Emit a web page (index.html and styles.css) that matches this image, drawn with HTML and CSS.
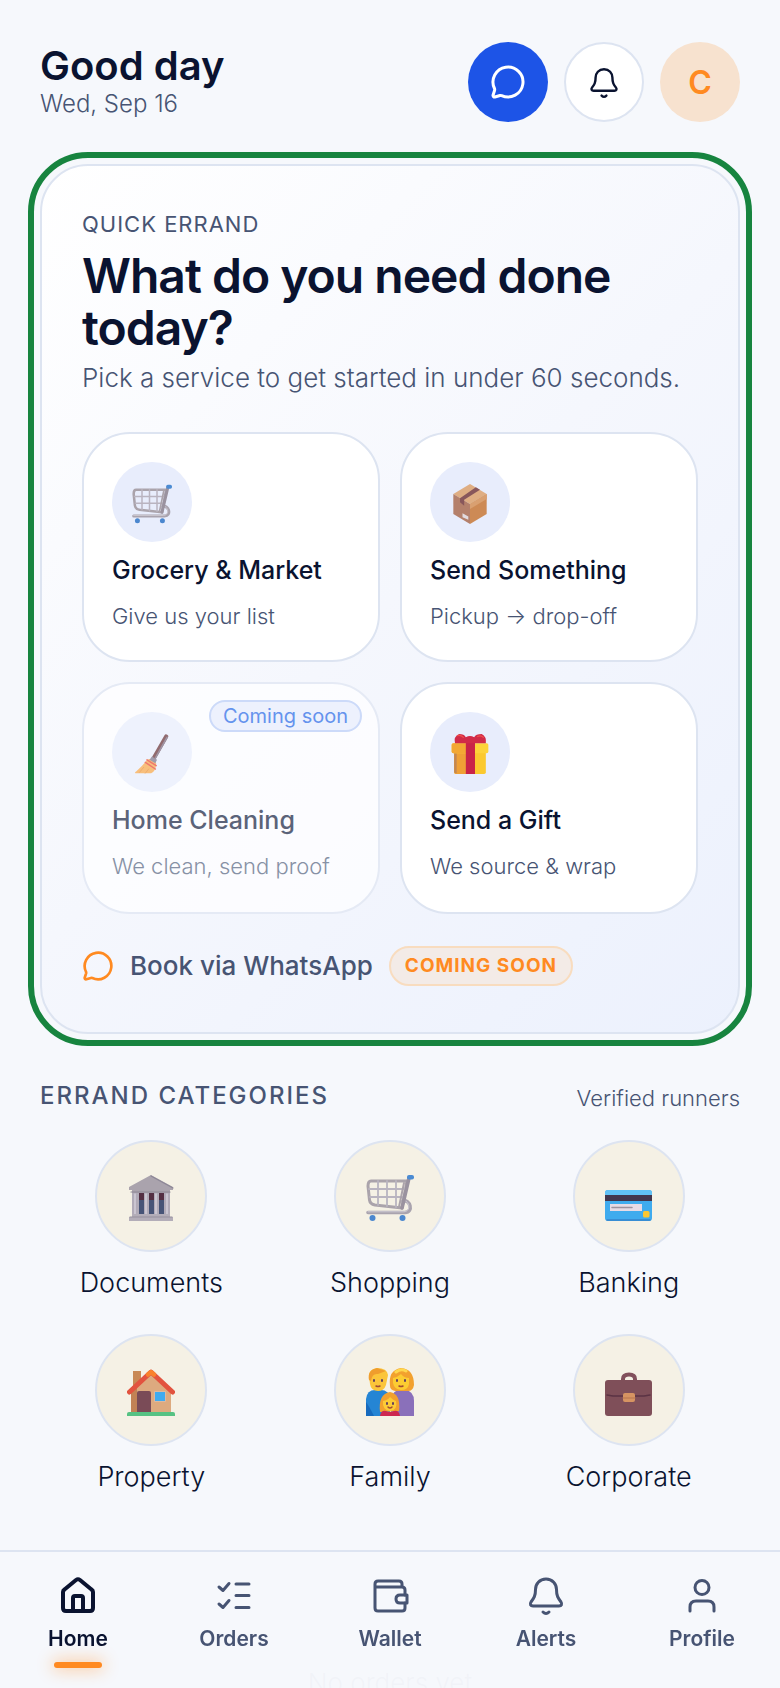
FILE: index.html
```html
<!DOCTYPE html>
<html lang="en">
<head>
  <meta charset="UTF-8">
  <meta name="viewport" content="width=device-width, initial-scale=1">
  <title>Errands - Home</title>
  <link rel="stylesheet" href="styles.css">
</head>
<body>
  <!-- shared icons -->
  <svg class="sprite" aria-hidden="true">
    <symbol id="i-chat" viewBox="0 0 24 24">
      <path d="M2.992 16.342a2 2 0 0 1 .094 1.167l-1.065 3.29a1 1 0 0 0 1.236 1.168l3.413-.998a2 2 0 0 1 1.099.092 10 10 0 1 0-4.777-4.719"/>
    </symbol>
    <symbol id="i-bell" viewBox="0 0 40 40">
      <path d="M20 4C13.500 4 9.500 9 9.500 14.500C9.500 21 8 23 5 27C3.600 29 4.500 31 7 31H33C35.500 31 36.400 29 35 27C32 23 30.500 21 30.500 14.500C30.500 9 26.500 4 20 4Z"/>
      <path d="M17 37Q20 40 23 37"/>
    </symbol>
    <symbol id="e-cart" viewBox="0 0 48 48">
      <path d="M37 27C44 25 48 38 39 38.500H2" fill="none" stroke="#a9a3ae" stroke-width="3.600"/>
      <path d="M37 26.500C43 25.500 46 37 38 37.800H2" fill="none" stroke="#cfcbd4" stroke-width="1"/>
      <path d="M5 7H41L36 34L9 31Q4 30 3.500 26L2 12Q2 7 5 7Z" fill="none" stroke="#aaa3ab" stroke-width="3"/>
      <path d="M12 7V31M21 7V32M30 7V33M3 15H39M4 23H37" fill="none" stroke="#b9b4c0" stroke-width="1.800"/>
      <path d="M43 4L36 34" stroke="#9a929f" stroke-width="3.600"/>
      <path d="M38 9L33 33" stroke="#aaa2aa" stroke-width="2"/>
      <rect x="41" y="1" width="7" height="4.600" rx="2" fill="#4b8bd3"/>
      <circle cx="6.500" cy="44" r="3" fill="#4b87cf"/>
      <circle cx="36.500" cy="44" r="3" fill="#4b87cf"/>
    </symbol>
    <symbol id="e-box" viewBox="0 0 48 48">
      <path d="M24 0L44 12L24 24L4 12Z" fill="#dfae83"/>
      <path d="M4 12L24 24V48L4 36Z" fill="#b4806b"/>
      <path d="M44 12L24 24V48L44 36Z" fill="#cd8a55"/>
      <path d="M44 12L24 24V30L44 18Z" fill="#d9a071"/>
      <path d="M31 4L36 7L17 19L17 26L12 22V17Z" fill="#88575b"/>
      <path d="M15 35L22 39V43L15 40Z" fill="#e2dbe0"/>
    </symbol>
    <symbol id="e-broom" viewBox="0 0 48 48">
      <path d="M41 3L26 29" stroke="#7b4a4c" stroke-width="5" stroke-linecap="round"/>
      <path d="M42 4L28 29" stroke="#8b7f90" stroke-width="2" stroke-linecap="round"/>
      <path d="M21 30Q27 29 29 35Q29 44 23 47L4 47Q3 46 5 45Q14 37 18 31Z" fill="#fbb35c"/>
      <path d="M16 34L28 42M18 31L29 38" stroke="#ef5a4b" stroke-width="1.800"/>
      <path d="M14 40L9 46M20 42L16 47" stroke="#ea9847" stroke-width="1"/>
      <path d="M24 27L30 31L28 35L21 31Z" fill="#8d8798"/>
    </symbol>
    <symbol id="e-gift" viewBox="0 0 48 48">
      <rect x="5" y="18" width="38" height="30" rx="2" fill="#fbc92f"/>
      <path d="M5 18H20V48H7Q5 48 5 46Z" fill="#efa036"/>
      <path d="M5 20H8V47H7Q5 47 5 45Z" fill="#c38752"/>
      <rect x="2" y="11" width="44" height="12" rx="2" fill="#fdd33a"/>
      <path d="M2 13Q2 11 4 11H20V23H4Q2 23 2 21Z" fill="#f3a834"/>
      <rect x="19" y="5" width="11" height="43" fill="#c92448"/>
      <path d="M19 11H6Q4 3 11 0Q17 0 19 4Q24 1 29 4Q31 0 38 0Q44 3 43 11Z" fill="#d12b48"/>
      <path d="M9 2Q13 1 16 4M33 3Q37 1 40 4" fill="none" stroke="#f0504a" stroke-width="1.500"/>
    </symbol>
    <symbol id="e-bank" viewBox="0 0 48 48">
      <path d="M5 18H43V42H5Z" fill="#b1abb8"/>
      <path d="M12 19H17V42H12ZM22 19H27V42H22ZM32 19H37V42H32Z" fill="#475477"/>
      <path d="M12 19H17V26H12ZM22 19H27V26H22ZM32 19H37V26H32Z" fill="#542f43"/>
      <path d="M8 20V41M19 20V41M29 20V41M40 20V41" stroke="#d2ced9" stroke-width="1.500"/>
      <path d="M24 1L46 13V16H43V19H5V16H2V13Z" fill="#aaa3ad"/>
      <path d="M24 2L46 14M4 18H43" fill="none" stroke="#8d8796" stroke-width="1.200"/>
      <path d="M5 40H43V43H46V47H2V43H5Z" fill="#b3adb8"/>
      <path d="M3 43H45" stroke="#958f9d" stroke-width="1"/>
    </symbol>
    <symbol id="e-card" viewBox="0 0 48 48">
      <rect x="0" y="16" width="47" height="31" rx="3" fill="#3fabee"/>
      <path d="M0 22V19Q0 16 3 16H44Q47 16 47 19V22Z" fill="#61c1f5"/>
      <path d="M0 21H47V27H0Z" fill="#42364e"/>
      <rect x="5" y="30" width="32" height="7" fill="#e7dbe6"/>
      <path d="M7 33.500H27" stroke="#9d929f" stroke-width="1.500"/>
      <rect x="38" y="37" width="6.500" height="6.500" rx="1.500" fill="#fbc631"/>
      <path d="M2 46H45" stroke="#3684cc" stroke-width="1.500"/>
    </symbol>
    <symbol id="e-house" viewBox="0 0 48 48">
      <path d="M6 3H14V20H6Z" fill="#c98955"/>
      <path d="M4 22L24 4L44 22V44H4Z" fill="#ddaa7f"/>
      <path d="M4 22L10 17V44H4Z" fill="#c28255"/>
      <path d="M10 44V25Q10 23 12 23H22Q24 23 24 25V44Z" fill="#7a4b57"/>
      <rect x="27" y="23" width="12" height="11" rx="1" fill="#dcb8a0"/>
      <rect x="28" y="24" width="10" height="9" fill="#3fabef"/>
      <path d="M2.500 24L24 4L45.500 24" fill="none" stroke="#e2533f" stroke-width="5" stroke-linecap="round" stroke-linejoin="round"/>
      <path d="M21 6.500L24 4L27 6.500" fill="none" stroke="#f9812c" stroke-width="4.500" stroke-linecap="round" stroke-linejoin="round"/>
      <path d="M0 48V46Q0 44 2 44H46Q48 44 48 46V48Z" fill="#56c283"/>
    </symbol>
    <symbol id="e-family" viewBox="0 0 48 48">
      <path d="M0 48V31Q1 22 9 22H15Q23 22 24 31V48Z" fill="#2585d4"/>
      <path d="M0 48V34Q3 38 8 48Z" fill="#176abd"/>
      <path d="M25 48V31Q27 22 34 22H39Q48 23 48 33V48Z" fill="#8a70ba"/>
      <path d="M3 8Q3 1 11 0Q21 0 22 7L20 17Q18 23 12 23Q5 23 4 16Z" fill="#fbc53a"/>
      <path d="M3 12Q1 2 11 0L20 3L12 6Q6 5 5 13Z" fill="#ef9d2d"/>
      <path d="M24 18Q22 2 35 0Q48 1 48 17Q47 23 42 23H29Q24 22 24 18Z" fill="#f2a12e"/>
      <path d="M27 10Q32 9 35 6Q38 10 43 10V16Q42 22 35 22Q28 21 27 15Z" fill="#fccc32"/>
      <path d="M30 4Q35 0 40 3" fill="none" stroke="#ffd74d" stroke-width="3"/>
      <path d="M14 44Q12 26 24 24Q35 26 33 43Z" fill="#f2a12e"/>
      <path d="M17 33Q22 32 24 29Q27 32 30 33Q32 42 24 43Q16 42 17 33Z" fill="#fccb36"/>
      <path d="M14 48Q15 42 20 43Q24 45 28 43Q33 42 34 48Z" fill="#cd2750"/>
      <path d="M8 12V13M16 12V13M31 12V13M39 12V13M21 35V36M27 35V36" stroke="#65405f" stroke-width="2"/>
      <path d="M10 18Q12 19 14 18M33 18Q35 19 37 18M22 39Q24 41 26 39" fill="none" stroke="#a34b32" stroke-width="1.500"/>
    </symbol>
    <symbol id="e-case" viewBox="0 0 48 48">
      <path d="M18 13V11Q18 6.500 24 6.500Q30 6.500 30 11V13" fill="none" stroke="#82505c" stroke-width="4"/>
      <rect x="0" y="12" width="47" height="36" rx="3" fill="#7f4f59"/>
      <path d="M2 27L8 28H39L45 27" fill="none" stroke="#5b3344" stroke-width="1.500"/>
      <rect x="18" y="25" width="12" height="9" rx="2" fill="#d69462"/>
      <path d="M18 30H30" stroke="#b6754e" stroke-width="1"/>
    </symbol>
  </svg>

  <div class="app">
    <header class="topbar">
      <div>
        <h1 class="greeting">Good day</h1>
        <p class="date">Wed, Sep 16</p>
      </div>
      <div class="actions">
        <button class="round-btn chat" aria-label="Messages"><svg><use href="#i-chat"/></svg></button>
        <button class="round-btn bell" aria-label="Notifications"><svg><use href="#i-bell"/></svg></button>
        <button class="round-btn avatar">C</button>
      </div>
    </header>

    <main>
      <section class="quick">
        <p class="eyebrow">QUICK ERRAND</p>
        <h2 class="quick-title">What do you need done today?</h2>
        <p class="quick-sub">Pick a service to get started in under 60 seconds.</p>

        <div class="services">
          <button class="service">
            <span class="service-icon"><svg><use href="#e-cart"/></svg></span>
            <span class="service-name">Grocery &amp; Market</span>
            <span class="service-desc">Give us your list</span>
          </button>
          <button class="service">
            <span class="service-icon"><svg><use href="#e-box"/></svg></span>
            <span class="service-name">Send Something</span>
            <span class="service-desc">Pickup → drop-off</span>
          </button>
          <button class="service soon" disabled>
            <span class="badge">Coming soon</span>
            <span class="service-icon"><svg><use href="#e-broom"/></svg></span>
            <span class="service-name">Home Cleaning</span>
            <span class="service-desc">We clean, send proof</span>
          </button>
          <button class="service">
            <span class="service-icon"><svg><use href="#e-gift"/></svg></span>
            <span class="service-name">Send a Gift</span>
            <span class="service-desc">We source &amp; wrap</span>
          </button>
        </div>

        <div class="whatsapp">
          <svg><use href="#i-chat"/></svg>
          <span>Book via WhatsApp</span>
          <span class="pill">COMING SOON</span>
        </div>
      </section>

      <section>
        <div class="section-head">
          <h3>ERRAND CATEGORIES</h3>
          <span>Verified runners</span>
        </div>
        <div class="categories">
          <a class="category" href="#documents"><span class="category-icon"><svg><use href="#e-bank"/></svg></span>Documents</a>
          <a class="category" href="#shopping"><span class="category-icon"><svg><use href="#e-cart"/></svg></span>Shopping</a>
          <a class="category" href="#banking"><span class="category-icon"><svg><use href="#e-card"/></svg></span>Banking</a>
          <a class="category" href="#property"><span class="category-icon"><svg><use href="#e-house"/></svg></span>Property</a>
          <a class="category" href="#family"><span class="category-icon"><svg><use href="#e-family"/></svg></span>Family</a>
          <a class="category" href="#corporate"><span class="category-icon"><svg><use href="#e-case"/></svg></span>Corporate</a>
        </div>
      </section>

      <p class="empty">No orders yet</p>
    </main>
  </div>

  <nav class="tabs">
    <a class="tab active" href="#home">
      <svg viewBox="0 0 40 40"><path d="M5 17Q5 15.500 6.500 14.500L18 5Q20 3.500 22 5L33.500 14.500Q35 15.500 35 17V33Q35 36 32 36H8Q5 36 5 33Z"/><path d="M15 36V23Q15 21 17 21H23Q25 21 25 23V36"/></svg>
      Home
    </a>
    <a class="tab" href="#orders">
      <svg viewBox="0 0 40 40"><path d="M5 12L9 15.500L15 8.500M5 29L9 32.500L15 25.500M22 9H35M22 20.500H35M22 32.500H35"/></svg>
      Orders
    </a>
    <a class="tab" href="#wallet">
      <svg viewBox="0 0 40 40"><path d="M32 12V9Q32 6 29 6H8Q5 6 5 9V33Q5 36 8 36H32Q35 36 35 33V28M5 12H32Q35 12 35 15V20"/><path d="M37 20H30Q26 20 26 24Q26 28 30 28H37Z"/></svg>
      Wallet
    </a>
    <a class="tab" href="#alerts">
      <svg><use href="#i-bell"/></svg>
      Alerts
    </a>
    <a class="tab" href="#profile">
      <svg viewBox="0 0 40 40"><circle cx="20" cy="12.500" r="7"/><path d="M8 36V32Q8 26 14 26H26Q32 26 32 32V36"/></svg>
      Profile
    </a>
  </nav>
</body>
</html>
```

FILE: styles.css
```css
* { box-sizing: border-box; }
body {
  margin: 0;
  background: #f6f8fc;
  color: #0a1330;
  font-family: Inter, "Liberation Sans", sans-serif;
}
h1, h2, h3, p { margin: 0; }
button { font-family: inherit; color: inherit; padding: 0; }
a { color: inherit; text-decoration: none; }
svg { display: block; fill: none; stroke-linecap: round; stroke-linejoin: round; }
.sprite { display: none; }

.app {
  height: 100vh;
  overflow-y: auto;
  scrollbar-width: none;
  padding: 42px 40px 0;
}

/* header */
.topbar {
  display: flex;
  justify-content: space-between;
  align-items: center;
  margin-bottom: 42px;
}
.greeting { font-size: 40px; font-weight: 600; line-height: 44px; }
.date { font-size: 24px; font-weight: 300; line-height: 32px; color: #475473; }
.actions { display: flex; gap: 16px; }
.round-btn {
  width: 80px;
  height: 80px;
  border: none;
  border-radius: 50%;
  display: grid;
  place-items: center;
  cursor: pointer;
}
.chat { background: #1d54e7; }
.chat svg { width: 36px; height: 36px; stroke: #fff; stroke-width: 2; }
.bell { background: #fff; border: 2px solid #dde4f1; }
.bell svg { width: 32px; height: 32px; stroke: #0a1330; stroke-width: 3; }
.avatar { background: #f7e2cf; color: #ff8a21; font-size: 32px; font-weight: 600; }

/* quick errand card */
.quick {
  border: 2px solid #dde4f1;
  border-radius: 48px;
  outline: 6px solid #17843f;
  outline-offset: 6px;
  background: linear-gradient(135deg, #fff 0%, #f5f7fd 50%, #ecf1fd 100%);
  padding: 42px 40px 46px;
}
.eyebrow { font-size: 22px; line-height: 32px; letter-spacing: 1px; color: #475473; }
.quick-title { margin-top: 10px; font-size: 48px; font-weight: 600; line-height: 52px; letter-spacing: -1px; }
.quick-sub { margin-top: 4px; font-size: 26px; font-weight: 300; line-height: 40px; color: #475473; }

.services {
  display: grid;
  grid-template-columns: 1fr 1fr;
  gap: 20px;
  margin-top: 34px;
}
.service {
  position: relative;
  display: flex;
  flex-direction: column;
  align-items: flex-start;
  border: 2px solid #dde4f1;
  border-radius: 48px;
  background: #fff;
  padding: 28px;
  text-align: left;
  cursor: pointer;
}
.service-icon {
  width: 80px;
  height: 80px;
  border-radius: 50%;
  background: #e8edfc;
  display: grid;
  place-items: center;
  padding-top: 4px;
}
.service-icon svg { width: 40px; height: 40px; }
.service-name { margin-top: 10px; font-size: 25px; font-weight: 500; line-height: 36px; }
.service-desc { margin-top: 12px; font-size: 22px; font-weight: 300; line-height: 32px; color: #475473; }
.soon {
  background: rgba(255, 255, 255, 0.7);
  border-color: #e5eaf5;
  color: #5b6379;
  padding-bottom: 30px;
  cursor: default;
}
.soon .service-icon { background: #eef2fd; }
.soon .service-icon svg { opacity: 0.8; }
.soon .service-desc { color: #8791a5; }
/* keeps the text at the top when the row is stretched */
.service { justify-content: flex-start; }
.badge {
  position: absolute;
  top: 16px;
  right: 16px;
  border: 2px solid #ccdaf9;
  border-radius: 16px;
  background: #edf1fd;
  color: #6593ed;
  font-size: 20px;
  font-weight: 400;
  line-height: 28px;
  padding: 0 12px;
}

.whatsapp {
  display: flex;
  align-items: center;
  margin-top: 32px;
  color: #475473;
  font-size: 26px;
  font-weight: 500;
  line-height: 40px;
}
.whatsapp svg { width: 32px; height: 32px; stroke: #ff8a21; stroke-width: 2; margin-right: 16px; }
.pill {
  margin-left: 16px;
  border: 2px solid #f8dcbf;
  border-radius: 20px;
  background: #f3ebe7;
  color: #ff8a21;
  font-size: 19px;
  font-weight: 700;
  line-height: 36px;
  letter-spacing: 1px;
  padding: 0 14px;
}

/* categories */
.section-head {
  display: flex;
  justify-content: space-between;
  align-items: flex-end;
  margin-top: 44px;
  color: #475473;
}
.section-head h3 { font-size: 24px; font-weight: 500; line-height: 36px; letter-spacing: 2px; }
.section-head span { font-size: 22px; font-weight: 300; line-height: 32px; }
.categories {
  display: grid;
  grid-template-columns: repeat(3, 1fr);
  gap: 32px 16px;
  margin-top: 26px;
}
.category {
  display: flex;
  flex-direction: column;
  align-items: center;
  gap: 12px;
  font-size: 27px;
  font-weight: 300;
  line-height: 38px;
}
.category-icon {
  width: 112px;
  height: 112px;
  border: 2px solid #dde4f1;
  border-radius: 50%;
  background: #f5f1e5;
  display: grid;
  place-items: center;
  padding-top: 4px;
}
.category-icon svg { width: 48px; height: 48px; }
.empty { margin-top: 168px; text-align: center; font-size: 26px; font-weight: 300; line-height: 38px; }

/* bottom tabs */
.tabs {
  position: fixed;
  left: 0;
  right: 0;
  bottom: 0;
  display: flex;
  border-top: 2px solid #dde4f1;
  background: rgba(246, 248, 252, 0.98);
  padding: 23px 0 20px;
}
.tab {
  flex: 1;
  display: flex;
  flex-direction: column;
  align-items: center;
  gap: 7px;
  color: #475473;
  font-size: 21px;
  font-weight: 600;
  line-height: 33px;
}
.tab svg { width: 40px; height: 40px; stroke: currentColor; stroke-width: 3; }
.active { color: #0a1330; }
.active svg { stroke-width: 4; }
.active::after {
  content: "";
  width: 48px;
  height: 6px;
  border-radius: 3px;
  background: #ff8a21;
  box-shadow: 0 0 16px 2px rgba(255, 138, 33, 0.45);
}
```
